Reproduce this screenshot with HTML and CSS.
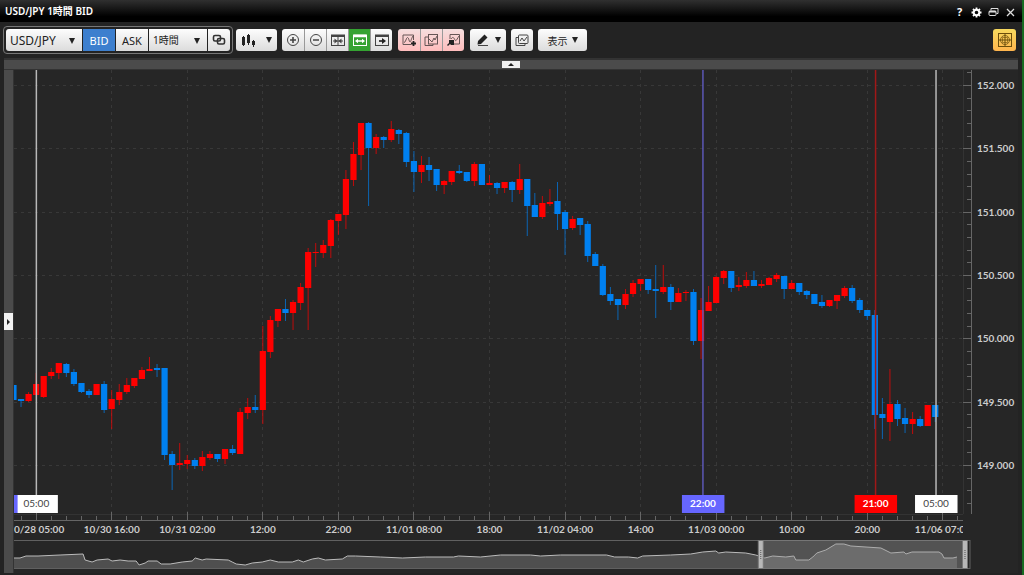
FILE: index.html
```html
<!DOCTYPE html>
<html lang="ja">
<head>
    <meta charset="UTF-8">
    <title>USD/JPY 1時間 BID</title>
    <link rel="stylesheet" href="styles.css">
</head>
<body>
    <header class="title-bar">
        <h1>USD/JPY 1時間 BID</h1>
        <div class="window-buttons">
            <button aria-label="ヘルプ">?</button>
            <button aria-label="設定">
                <svg width="11" height="11" viewBox="0 0 11 11"><circle cx="5.5" cy="5.5" r="2.8" fill="none" stroke="#fff" stroke-width="2"/><path d="M5.500 .5v2M5.500 8.500v2M.5 5.500h2M8.500 5.500h2M2 2l1.200 1.200M7.800 7.800L9 9M9 2L7.800 3.200M3.200 7.800L2 9" stroke="#fff" stroke-width="1.800"/></svg>
            </button>
            <button aria-label="元に戻す">
                <svg width="11" height="11" viewBox="0 0 11 11" fill="none" stroke="#ddd"><path d="M3 3.500V1.500h7v5H8.500"/><rect x="1" y="4" width="7" height="4.500" rx="1"/><path d="M1 4.700h7" stroke-width="1.600"/></svg>
            </button>
            <button aria-label="閉じる">
                <svg width="11" height="11" viewBox="0 0 11 11"><path d="M2 2l7 7M9 2l-7 7" stroke="#ddd" stroke-width="1.300"/></svg>
            </button>
        </div>
    </header>

    <div class="toolbar">
        <div class="symbol-group">
            <div class="select-box">
                <select class="symbol-select" aria-label="通貨ペア"><option>USD/JPY</option></select>
            </div>
            <button class="tool text active">BID</button>
            <button class="tool text">ASK</button>
            <div class="select-box">
                <select class="period-select" aria-label="足種"><option>1時間</option></select>
            </div>
            <button class="tool" aria-label="連動">
                <svg width="14" height="14" viewBox="0 0 14 14" fill="none" stroke="#333" stroke-width="1.600"><rect x="1.500" y="2.500" width="7" height="5.500" rx="1.500"/><rect x="5.500" y="5.500" width="7" height="5.500" rx="1.500"/></svg>
            </button>
        </div>

        <button class="tool wide" aria-label="チャートの種類">
            <svg width="13" height="14" viewBox="0 0 13 14" fill="#222"><path d="M0 4h3v8H0zM1 3h1v10H1zM5 2h3v8H5zM6 1h1v11H6zM10 8h3v4h-3zM11 7h1v7h-1z"/></svg>
            <span class="arrow"></span>
        </button>

        <div class="tool-group">
            <button class="tool" aria-label="拡大">
                <svg width="14" height="14" viewBox="0 0 14 14" fill="none" stroke="#444"><circle cx="7" cy="7" r="5.500"/><path d="M4 7h6M7 4v6" stroke-width="1.600"/></svg>
            </button>
            <button class="tool" aria-label="縮小">
                <svg width="14" height="14" viewBox="0 0 14 14" fill="none" stroke="#444"><circle cx="7" cy="7" r="5.500"/><path d="M4 7h6" stroke-width="1.400"/></svg>
            </button>
            <button class="tool" aria-label="間隔を縮小">
                <svg width="14" height="14" viewBox="0 0 14 14" fill="none" stroke="#444"><rect x=".5" y="2" width="13" height="10.500"/><path d="M1 3h12" stroke-width="2"/><path d="M7 4v8M2 8h10"/><path d="M3.500 5.500L6.500 8l-3 2.500zM10.500 5.500L7.500 8l3 2.500z" fill="#444" stroke="none"/></svg>
            </button>
            <button class="tool green" aria-label="自動調整">
                <svg width="14" height="14" viewBox="0 0 14 14" fill="none" stroke="#fff"><rect x=".5" y="2" width="13" height="10.500"/><path d="M1 3h12" stroke-width="2.400"/><path d="M4 8h6" stroke-width="1.400"/><path d="M5 5.800L2 8l3 2.200zM9 5.800L12 8l-3 2.200z" fill="#fff" stroke="none"/></svg>
            </button>
            <button class="tool" aria-label="最新へ移動">
                <svg width="14" height="14" viewBox="0 0 14 14" fill="none" stroke="#444"><rect x=".5" y="2" width="13" height="10.500"/><path d="M1 3h12" stroke-width="2"/><path d="M4 8h4" stroke-width="2"/><path d="M7 5l4 3-4 3z" fill="#222" stroke="none"/></svg>
            </button>
        </div>

        <div class="tool-group pink">
            <button class="tool" aria-label="テクニカル追加">
                <svg width="15" height="14" viewBox="0 0 15 14" fill="none" stroke="#655"><path d="M11.500 7V2H1v9.500h8"/><path d="M2 9.500c2 0 2-5 3.500-5S7 9 8 9s1-3 3-6"/><path d="M11.500 8v5M9 10.500h5" stroke="#222" stroke-width="1.800"/></svg>
            </button>
            <button class="tool" aria-label="テクニカル一覧">
                <svg width="15" height="14" viewBox="0 0 15 14" fill="none" stroke="#655"><path d="M4 4H1v8.500h8V11"/><rect x="4.500" y="1.500" width="9" height="9.500"/><path d="M5 6l3 3 2-4 1 2 2-4"/></svg>
            </button>
            <button class="tool" aria-label="テクニカル設定">
                <svg width="15" height="14" viewBox="0 0 15 14" fill="none" stroke="#655"><path d="M4 6V1.500h9.500V11H8"/><path d="M5 6c2-3 3-1 4 1s2-1 4-4"/><path d="M1.500 12.500L4 10" stroke="#222" stroke-width="1.500"/><path d="M3 7h5v5H5L3 10z" fill="#222" stroke="none"/></svg>
            </button>
        </div>

        <button class="tool pen" aria-label="描画">
            <svg width="14" height="14" viewBox="0 0 14 14"><path d="M2 8l6.500-6.500 3 3L5 11l-3.500.5z" fill="#222"/><path d="M2 12.500h10" stroke="#444"/></svg>
            <span class="arrow"></span>
        </button>
        <button class="tool round" aria-label="チャート保存">
            <svg width="14" height="14" viewBox="0 0 14 14" fill="none" stroke="#444"><path d="M3 4.500H1v8h9V11"/><rect x="3.500" y="2" width="9.500" height="8.500" rx="1"/><path d="M5 8l2-3 2 3 3-4"/></svg>
        </button>
        <button class="tool display">表示<span class="arrow"></span></button>

        <button class="tool layout" aria-label="レイアウト">
            <svg width="14" height="14" viewBox="0 0 14 14" fill="none" stroke="#6b4e0c"><rect x=".5" y=".5" width="13" height="13"/><circle cx="7" cy="7" r="4.500" stroke-width=".8"/><path d="M7 1v12M1 7h12"/><path d="M4.500 4.500h5v5h-5z" stroke-width=".6"/></svg>
        </button>
    </div>

    <div class="top-rail">
        <button aria-label="上部パネルを開く"><span class="tip up"></span></button>
    </div>

    <main class="workspace">
        <div class="side-rail">
            <button aria-label="サイドパネルを開く"><span class="tip right"></span></button>
        </div>
        <div class="charts">
            <svg class="chart" id="chart"></svg>
            <svg class="navigator" id="navigator"></svg>
        </div>
    </main>

    <script src="chart.js"></script>
</body>
</html>
```
FILE: styles.css
```css
* {
    box-sizing: border-box;
}

body {
    margin: 0;
    height: 100vh;
    display: flex;
    flex-direction: column;
    overflow: hidden;
    background: #232323;
    border-right: 2px solid #176b22;
    font-family: "Noto Sans", "Noto Sans CJK JP", sans-serif;
    font-size: 12px;
}

button,
select {
    margin: 0;
    padding: 0;
    border: 0;
    font: inherit;
    color: #222;
    cursor: pointer;
}

svg {
    display: block;
}

/* Title bar */
.title-bar {
    flex: none;
    height: 22px;
    display: flex;
    align-items: center;
    justify-content: space-between;
    padding: 0 6px 2px 5px;
    background: linear-gradient(#303030, #000 75%);
}

.title-bar h1 {
    margin: 0;
    color: #fff;
    font-size: 10px;
    font-weight: 600;
}

.window-buttons {
    display: flex;
    gap: 6px;
    padding-top: 4px;
}

.window-buttons button {
    width: 11px;
    height: 12px;
    background: none;
    color: #fff;
    font-size: 11px;
    font-weight: 700;
    line-height: 12px;
}

/* Toolbar */
.toolbar {
    flex: none;
    height: 36px;
    display: flex;
    align-items: center;
    padding: 0 6px 0 3px;
}

.symbol-group {
    display: flex;
    gap: 1px;
    padding: 2px;
    margin-right: 3px;
    border: 1px solid #777;
    border-radius: 4px;
}

.tool,
.select-box select {
    height: 22px;
    background: linear-gradient(#fdfdfd, #dcdcdc);
}

.tool {
    width: 22px;
    display: flex;
    align-items: center;
    justify-content: center;
}

.tool.text {
    width: 32px;
    font-size: 11px;
}

.tool.active {
    background: #3d7fce;
    color: #fff;
}

.select-box {
    position: relative;
}

.select-box select {
    display: block;
    appearance: none;
    padding-left: 4px;
    border-radius: 3px 0 0 3px;
}

.select-box::after,
.arrow {
    border: 3px solid transparent;
    border-top: 6px solid #222;
    border-bottom: 0;
}

.select-box::after {
    content: "";
    position: absolute;
    right: 7px;
    top: 9px;
    pointer-events: none;
}

.symbol-select {
    width: 76px;
}

.select-box .period-select {
    width: 58px;
    border-radius: 0;
    font-size: 10px;
}

.symbol-group .tool:last-child {
    border-radius: 0 3px 3px 0;
}

.tool.wide,
.tool.pen,
.tool.round,
.tool.display {
    border-radius: 3px;
}

.tool.wide {
    width: 41px;
    gap: 11px;
    margin-right: 5px;
}

.tool-group {
    display: flex;
    margin-right: 6px;
    border-radius: 3px;
    overflow: hidden;
}

.tool-group .tool + .tool {
    border-left: 1px solid #999;
}

.tool.green {
    background: #35a332;
}

.pink .tool {
    background: linear-gradient(#f5dede, #ffbcbc);
}

.tool.pen {
    width: 36px;
    gap: 5px;
    margin-right: 5px;
}

.tool.round {
    margin-right: 5px;
}

.tool.display {
    width: 49px;
    gap: 4px;
    font-size: 10px;
}

.tool.layout {
    width: 23px;
    margin-left: auto;
    border-radius: 3px;
    background: linear-gradient(#f7d95e, #ffb54d);
}

/* Collapsible panel rails */
.top-rail {
    flex: none;
    height: 12px;
    margin: 0 4px;
    padding: 1px 0;
    display: flex;
    justify-content: center;
    background: #4b4b4b;
    border-top: 2px solid #333;
    border-bottom: 1px solid #333;
}

.top-rail button,
.side-rail button {
    display: flex;
    align-items: center;
    justify-content: center;
    background: #f2f2f2;
}

.top-rail button {
    width: 18px;
    height: 7px;
}

.tip {
    border: 3px solid transparent;
}

.tip.up {
    border-top: 0;
    border-bottom-color: #222;
}

.tip.right {
    border-right: 0;
    border-left-color: #222;
}

.workspace {
    flex: 1;
    min-height: 0;
    display: flex;
    padding: 0 4px 2px;
}

.side-rail {
    width: 10px;
    display: flex;
    align-items: center;
    background: #4b4b4b;
    border-right: 1px solid #333;
}

.side-rail button {
    width: 9px;
    height: 17px;
}

/* Charts */
.charts {
    flex: 1;
    min-width: 0;
    display: flex;
    flex-direction: column;
    background: #262626;
}

.chart {
    flex: 1;
    min-height: 0;
    width: 100%;
}

.navigator {
    flex: none;
    width: 100%;
    height: 33px;
}

.chart text {
    fill: #ccc;
    font-family: Lato, sans-serif;
    font-size: 10px;
    font-weight: 700;
}

.chart .marker-text {
    fill: #fff;
}

.chart .marker-text.dark {
    fill: #444;
    font-weight: 400;
}

.grid {
    stroke: #383838;
    stroke-dasharray: 3 4;
}

.axis {
    stroke: #666;
    shape-rendering: crispEdges;
}

.plot-edge {
    stroke: #333;
    shape-rendering: crispEdges;
}

.up {
    fill: #f00;
}

.down {
    fill: #0080f0;
}

.wick {
    opacity: 0.7;
}

.nav-frame {
    fill: none;
    stroke: #606060;
}

.nav-area {
    fill: #4f4f4f;
}

.nav-line {
    fill: none;
    stroke: #bbb;
}

.nav-window {
    fill: #999;
    fill-opacity: 0.4;
}

.nav-handle {
    fill: #b8b8b8;
    stroke: #777;
}

.nav-grip {
    stroke: #555;
    stroke-dasharray: 1 1;
}
```
FILE: chart.js
```javascript
// Candles: [color, high, top, bottom, low]
// Levels run downwards, 85 is 152.000 and 465 is 149.000
const candles = [
    ['b', 385, 385, 400, 400], ['b', 399, 399, 401, 407], ['r', 392, 394, 401, 402],
    ['r', 373, 384, 395, 395], ['r', 376, 376, 397, 398], ['r', 368, 372, 376, 379],
    ['r', 363, 363, 373, 379], ['b', 363, 364, 373, 377], ['b', 369, 372, 384, 386],
    ['b', 383, 383, 392, 393], ['b', 389, 391, 395, 398], ['r', 384, 384, 395, 395],
    ['b', 381, 384, 410, 413], ['r', 390, 399, 409, 429], ['r', 384, 392, 400, 405],
    ['r', 378, 385, 392, 394], ['r', 378, 378, 386, 388], ['r', 367, 370, 379, 379],
    ['r', 357, 369, 371, 371], ['b', 364, 368, 370, 377], ['b', 368, 368, 455, 460],
    ['b', 451, 454, 465, 490], ['r', 443, 463, 465, 470], ['r', 455, 460, 464, 469],
    ['b', 458, 460, 466, 469], ['r', 451, 457, 466, 471], ['r', 451, 454, 458, 460],
    ['b', 454, 454, 459, 462], ['r', 449, 449, 459, 464], ['b', 445, 449, 453, 455],
    ['r', 408, 412, 454, 454], ['r', 398, 407, 413, 419], ['b', 395, 407, 410, 413],
    ['r', 326, 351, 410, 424], ['r', 316, 320, 352, 358], ['r', 309, 309, 321, 327],
    ['b', 299, 309, 313, 321], ['r', 300, 302, 313, 330], ['r', 283, 287, 303, 310],
    ['r', 248, 252, 288, 330], ['r', 243, 252, 253, 267], ['r', 240, 245, 253, 258],
    ['r', 219, 220, 246, 258], ['r', 214, 214, 221, 235], ['r', 170, 179, 215, 229],
    ['r', 142, 154, 180, 186], ['r', 123, 123, 155, 170], ['b', 122, 123, 148, 206],
    ['r', 134, 137, 148, 154], ['b', 136, 137, 140, 148], ['r', 121, 129, 140, 142],
    ['b', 129, 130, 134, 144], ['b', 132, 133, 162, 167], ['b', 151, 161, 172, 192],
    ['r', 156, 165, 172, 183], ['b', 157, 165, 170, 181], ['b', 169, 169, 185, 191],
    ['r', 180, 181, 185, 194], ['r', 171, 171, 182, 185], ['b', 165, 171, 173, 174],
    ['b', 172, 172, 181, 182], ['r', 162, 164, 181, 186], ['b', 164, 164, 185, 185],
    ['r', 175, 183, 185, 185], ['b', 182, 183, 188, 194], ['r', 182, 182, 188, 193],
    ['b', 181, 182, 190, 202], ['r', 164, 179, 190, 194], ['b', 179, 179, 206, 236],
    ['b', 193, 205, 217, 217], ['r', 196, 203, 217, 219], ['r', 189, 202, 204, 206],
    ['b', 182, 201, 214, 230], ['b', 210, 212, 229, 255], ['r', 216, 219, 228, 230],
    ['b', 218, 218, 225, 235], ['b', 221, 224, 256, 262], ['b', 252, 254, 266, 266],
    ['b', 264, 266, 295, 296], ['b', 287, 294, 301, 305], ['b', 299, 299, 305, 320],
    ['r', 289, 294, 305, 309], ['r', 280, 283, 294, 297], ['r', 279, 279, 284, 291],
    ['b', 279, 279, 290, 294], ['b', 265, 289, 291, 318], ['r', 265, 287, 292, 294],
    ['b', 284, 287, 302, 310], ['r', 288, 293, 302, 302], ['r', 290, 292, 293, 301],
    ['b', 289, 292, 341, 345], ['r', 298, 310, 341, 359], ['r', 286, 302, 311, 311],
    ['r', 276, 277, 303, 303], ['r', 270, 271, 278, 284], ['b', 271, 271, 288, 292],
    ['r', 277, 285, 287, 291], ['r', 272, 280, 286, 288], ['b', 271, 280, 286, 286],
    ['r', 280, 284, 286, 288], ['r', 277, 278, 285, 285], ['r', 273, 275, 279, 282],
    ['b', 276, 276, 289, 299], ['r', 280, 283, 289, 289], ['b', 283, 283, 292, 295],
    ['b', 290, 291, 295, 299], ['b', 294, 294, 304, 304], ['b', 295, 302, 306, 308],
    ['r', 300, 300, 306, 307], ['r', 295, 295, 301, 309], ['r', 286, 288, 296, 298],
    ['b', 285, 288, 301, 303], ['b', 298, 300, 310, 313], ['b', 310, 310, 316, 320],
    ['b', 310, 315, 415, 429], ['b', 398, 414, 418, 439], ['r', 369, 404, 422, 441],
    ['b', 400, 404, 419, 426], ['b', 408, 418, 424, 433], ['r', 412, 419, 424, 434],
    ['b', 416, 419, 426, 427], ['r', 405, 405, 426, 426], ['b', 405, 405, 417, 422]
];

// Axis labels by candle index
const timeLabels = [
    [3, '10/28 05:00'], [13, '10/30 16:00'], [23, '10/31 02:00'], [33, '12:00'],
    [43, '22:00'], [53, '11/01 08:00'], [63, '18:00'], [73, '11/02 04:00'],
    [83, '14:00'], [93, '11/03 00:00'], [103, '10:00'], [113, '20:00'], [123, '11/06 07:00']
];

const markers = [
    { at: 3.03, text: '05:00', line: '#b8b8b8', box: '#fff', dark: true },
    { at: -2.3, text: '', line: '#5c57b5', box: '#6666ff' },
    { at: 91.25, text: '22:00', line: '#5c57b5', box: '#6666ff' },
    { at: 114.1, text: '21:00', line: '#a01818', box: '#f00' },
    { at: 122.1, text: '05:00', line: '#b8b8b8', box: '#fff', dark: true }
];

// Overview line: [x, y] on a 956 x 30 field
const overview = [
    [0, 18], [6, 18], [12, 16], [24, 16], [46, 15], [69, 14], [71, 20], [78, 22], [83, 20],
    [94, 19], [98, 21], [106, 20], [114, 21], [122, 21], [125, 25], [131, 23], [134, 21],
    [143, 21], [147, 24], [156, 24], [168, 22], [178, 21], [181, 18], [188, 20], [192, 19],
    [214, 20], [218, 22], [222, 24], [231, 25], [238, 23], [248, 22], [256, 20], [264, 22],
    [278, 22], [284, 20], [289, 22], [298, 19], [304, 18], [311, 20], [328, 19], [333, 16],
    [341, 16], [366, 17], [388, 18], [411, 17], [439, 17], [444, 16], [466, 17], [486, 15],
    [516, 15], [526, 16], [546, 15], [592, 15], [600, 17], [614, 17], [623, 18], [628, 16],
    [656, 15], [676, 14], [688, 12], [701, 11], [704, 13], [711, 12], [731, 13], [741, 15],
    [750, 18], [758, 16], [771, 17], [779, 16], [781, 20], [794, 20], [798, 17], [802, 13],
    [811, 10], [821, 4], [829, 4], [836, 6], [866, 8], [876, 13], [889, 12], [891, 14],
    [897, 12], [924, 12], [927, 14], [929, 18], [938, 18], [942, 17]
];

function line(cls, x1, y1, x2, y2) {
    return `<line class="${cls}" x1="${x1}" y1="${y1}" x2="${x2}" y2="${y2}"/>`;
}

function rect(cls, x, y, w, h) {
    return `<rect class="${cls}" x="${x}" y="${y}" width="${w}" height="${h}"/>`;
}

function drawChart() {
    const svg = document.getElementById('chart');
    const plotW = svg.clientWidth - 55;
    const plotH = svg.clientHeight - 26;
    const step = plotW / 125.6;
    const toX = i => (i - 0.07) * step;
    const toY = v => (v - 70) * plotH / 444;
    const axisX = plotW + 8;
    const axisY = plotH + 6;
    let out = `<defs><clipPath id="plot"><rect width="${plotW}" height="${plotH + 26}"/></clipPath></defs>`;

    out += line('plot-edge', plotW, 0, plotW, plotH) + line('plot-edge', 0, plotH, plotW, plotH);
    out += line('axis', axisX, 0, axisX, plotH) + line('axis', 0, axisY, plotW, axisY);

    // price axis, five ticks for each half yen
    for (let n = -1; n < 34; n++) {
        const y = Math.round(toY(85 + n * 380 / 30));
        const major = n % 5 === 0;
        if (major) {
            out += line('grid', 0, y + 0.5, plotW, y + 0.5);
            out += `<text x="${axisX + 6}" y="${y + 4}">${(152 - n / 10).toFixed(3)}</text>`;
        }
        out += line('axis', axisX - (major ? 8 : 4), y, axisX, y);
    }

    out += '<g clip-path="url(#plot)">';
    for (let i = 1; i < 126; i += 2) {
        const x = Math.floor(toX(i));
        const major = i % 10 === 3;
        if (major && i > 3) {
            out += line('grid', x + 0.5, 0, x + 0.5, plotH);
        }
        out += line('axis', x, axisY - (major ? 8 : 4), x, axisY);
    }
    for (const [i, text] of timeLabels) {
        out += `<text x="${toX(i)}" y="${plotH + 19}" text-anchor="middle">${text}</text>`;
    }

    candles.forEach(([color, high, top, bottom, low], i) => {
        const cls = color === 'r' ? 'up' : 'down';
        const x = toX(i);
        out += rect(cls + ' wick', x - 0.5, toY(high), 1, toY(low) - toY(high));
        out += rect(cls, x - 3.1, toY(top), 6.2, toY(bottom) - toY(top));
    });

    for (const m of markers) {
        const x = toX(m.at);
        out += `<line x1="${x}" y1="0" x2="${x}" y2="${plotH - 18}" stroke="${m.line}" stroke-width="1.5"/>`;
        out += `<rect x="${x - 21}" y="${plotH - 19}" width="42.5" height="18" fill="${m.box}"/>`;
        out += `<text class="marker-text${m.dark ? ' dark' : ''}" x="${x}" y="${plotH - 7}" text-anchor="middle">${m.text}</text>`;
    }
    svg.innerHTML = out + '</g>';
}

function drawNavigator() {
    const svg = document.getElementById('navigator');
    const w = svg.clientWidth - 47;
    const scale = w / 956;
    const points = overview.map(([x, y]) => `${x * scale},${y}`).join(' ');
    const from = 746 * scale;
    const to = 950 * scale;
    let out = `<rect class="nav-frame" x="-1" y="0.5" width="${w}" height="28"/>`;
    out += `<polygon class="nav-area" points="0,28 ${points} ${942 * scale},28"/>`;
    out += `<polyline class="nav-line" points="${points}"/>`;
    out += rect('nav-window', from, 0, to - from, 29);
    for (const x of [from, to]) {
        out += rect('nav-handle', x - 2.5, 0.5, 5, 28);
        out += line('nav-grip', x, 10, x, 20);
    }
    svg.innerHTML = out;
}

function draw() {
    drawChart();
    drawNavigator();
}

window.addEventListener('resize', draw);
draw();
```
